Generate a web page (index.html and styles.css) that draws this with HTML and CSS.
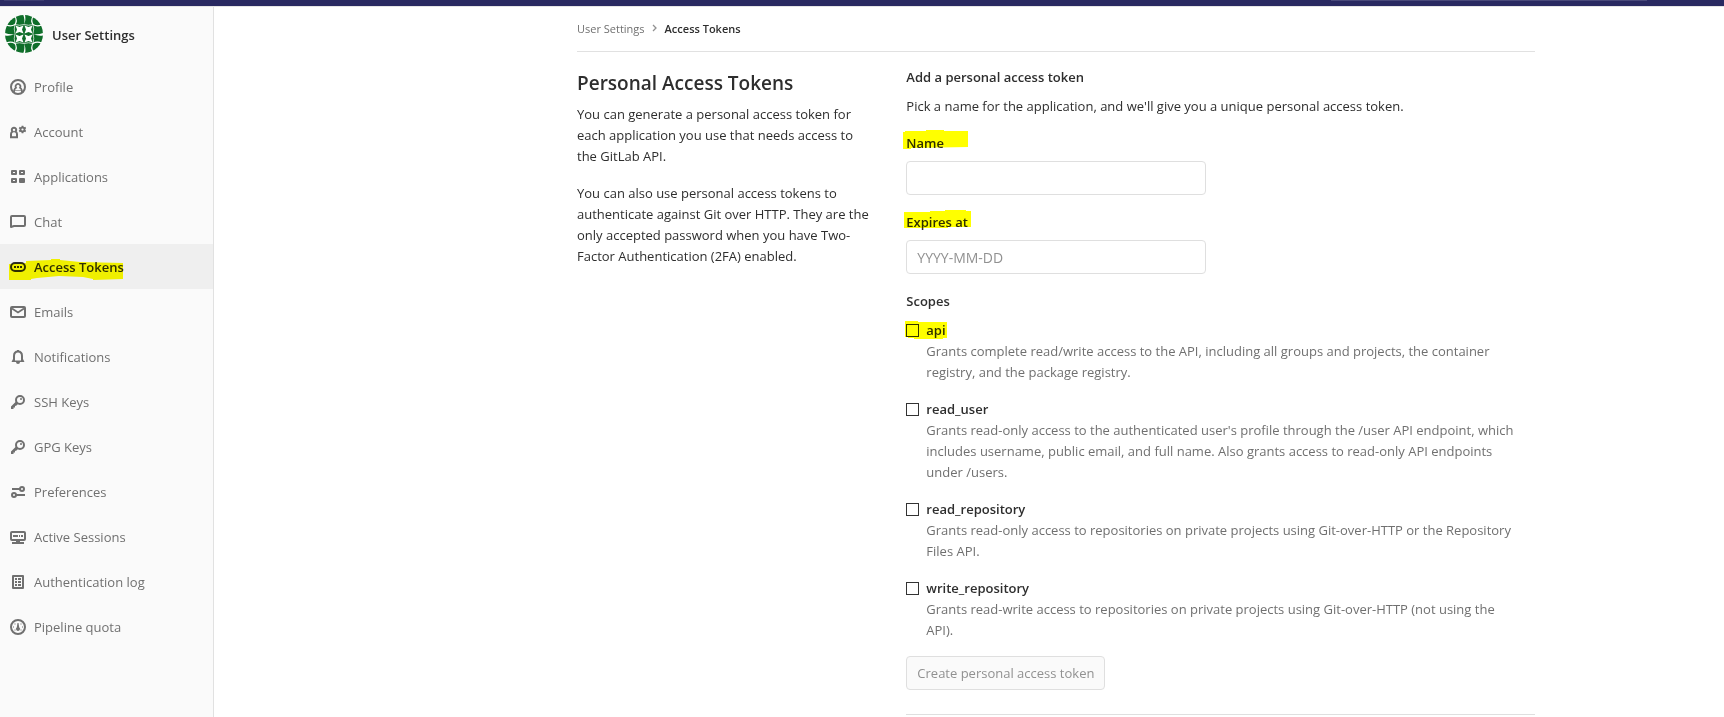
FILE: index.html
```html
<!DOCTYPE html>
<html lang="en">
<head>
<meta charset="utf-8">
<title>Access Tokens · User Settings</title>
<link rel="stylesheet" href="styles.css">
</head>
<body>
<header class="navbar"><span class="navbar-logo"></span><span class="navbar-search"></span></header>
<div class="page">
  <aside class="sidebar">
    <a class="context" href="#">
      <svg class="avatar" viewBox="0 0 38 38" aria-hidden="true">
        <circle cx="19" cy="19" r="19" fill="#0f6e2a"/>
        <g fill="#fff">
          <path d="M10.500 10.500l4 1.500 4-1.500-1.500 4 1.500 4-4-1.500-4 1.500 1.500-4zM19.500 10.500l4 1.500 4-1.500-1.500 4 1.500 4-4-1.500-4 1.500 1.500-4zM10.500 19.500l4 1.500 4-1.500-1.500 4 1.500 4-4-1.500-4 1.500 1.500-4zM19.500 19.500l4 1.500 4-1.500-1.500 4 1.500 4-4-1.500-4 1.500 1.500-4z"/>
          <path id="lens" d="M0 18q5 2 9.500 1-4.500 2.500-9.500 1.500zM38 18q-5 2-9.500 1 4.500 2.500 9.500 1.500zM18.300 0q2 5 .5 9.500 2.500-4.500 1.200-9.500zM18.300 38q2-5 .5-9.500 2.500 4.500 1.200 9.500z"/>
        </g>
        <g fill="none" stroke="#fff" stroke-width="1.200">
          <path d="M10 1.500q2.500 4 0 8-4 2.500-8.500.5M28 1.500q-2.500 4 0 8 4 2.500 8.500.5M10 36.500q2.500-4 0-8-4-2.500-8.500-.5M28 36.500q-2.500-4 0-8 4-2.500 8.500-.5"/>
          <path d="M10 9.500q-1.500 4.500 0 9-1.500 5 0 10 4.500-1.500 9 0 4.500-1.500 9 0 1.500-5 0-10 1.500-4.500 0-9-4.500 1.500-9 0-4.500 1.500-9 0z" stroke-width=".7"/>
        </g>
      </svg>
      <span class="context-title">User Settings</span>
    </a>
    <nav>
      <ul class="menu">
        <li><a href="#"><svg class="icon" viewBox="0 0 16 16"><circle cx="8" cy="8" r="7" fill="none" stroke="currentColor" stroke-width="2"/><path d="M4 13c0-2.500.6-3.600 2-4.300a2.400 2.400 0 1 1 4 0c1.400.7 2 1.800 2 4.300" fill="none" stroke="currentColor" stroke-width="1.700"/><path d="M5 11h6v1H5z" opacity=".6"/></svg>Profile</a></li>
        <li><a href="#"><svg class="icon" viewBox="0 0 16 16"><path d="M1 13.200V10c0-1.300.6-2 1.600-2.400a2.200 2.200 0 1 1 2.800 0C6.400 8 7 8.700 7 10v3.200z" fill="none" stroke="currentColor" stroke-width="2"/><circle cx="12.500" cy="5.500" r="2" fill="none" stroke="currentColor" stroke-width="1.800"/><path d="M12.500 1.700v1.800M12.500 7.500v1.800M9.200 3.600l1.600.9M14.200 6.500l1.600.9M9.200 7.400l1.600-.9M14.200 4.500l1.600-.9" stroke="currentColor" stroke-width="1.800"/></svg>Account</a></li>
        <li><a href="#"><svg class="icon" viewBox="0 0 16 16"><path fill="none" stroke="currentColor" stroke-width="2" stroke-linejoin="round" d="M2 2h4v3H2zM10 2h4v3h-4zM2 10h4v3H2z"/><rect x="9" y="9" width="6" height="5" rx="1"/></svg>Applications</a></li>
        <li><a href="#"><svg class="icon" viewBox="0 0 16 16"><path fill="none" stroke="currentColor" stroke-width="2" stroke-linejoin="round" d="M1 13V3q0-1 1-1h12q1 0 1 1v8q0 1-1 1H4z"/></svg>Chat</a></li>
        <li class="active"><a href="#"><svg class="icon" viewBox="0 0 16 16"><rect x="1" y="4" width="14" height="8" rx="4" fill="none" stroke="currentColor" stroke-width="2"/><path d="M4 7h2v2H4zM7 7h2v2H7zM10 7h2v2h-2z"/></svg>Access Tokens</a><svg class="marker marker-menu" viewBox="0 0 114 21"><path d="M0 5l17-1v-2l25-1V0h9v1l20 2 43 1v16l-30 1v-1l-10-2-24-1-22 2-6 1v1H0z"/></svg></li>
        <li><a href="#"><svg class="icon" viewBox="0 0 16 16"><rect x="1" y="3" width="14" height="10" rx="1" fill="none" stroke="currentColor" stroke-width="2"/><path d="M2 4.500l6 4 6-4" fill="none" stroke="currentColor" stroke-width="1.800"/></svg>Emails</a></li>
        <li><a href="#"><svg class="icon" viewBox="0 0 16 16"><path fill="none" stroke="currentColor" stroke-width="2" d="M4 12V7q0-4.500 4-4.500T12 7v5"/><path d="M7 1h2v2H7zM3 10l-1.500 3H6q0 2 2 2t2-2h4.500L13 10l-1 1.500H4z"/></svg>Notifications</a></li>
        <li><a href="#"><svg class="icon" viewBox="0 0 16 16"><circle cx="10" cy="6" r="4" fill="none" stroke="currentColor" stroke-width="2"/><circle cx="11" cy="5" r="1"/><path d="M6 7.500L1 12.500V15h2.500v-1.500H5V12l1.500-.5 2-2z"/></svg>SSH Keys</a></li>
        <li><a href="#"><svg class="icon" viewBox="0 0 16 16"><circle cx="10" cy="6" r="4" fill="none" stroke="currentColor" stroke-width="2"/><circle cx="11" cy="5" r="1"/><path d="M6 7.500L1 12.500V15h2.500v-1.500H5V12l1.500-.5 2-2z"/></svg>GPG Keys</a></li>
        <li><a href="#"><svg class="icon" viewBox="0 0 16 16"><g fill="none" stroke="currentColor" stroke-width="2"><circle cx="12" cy="5" r="2"/><circle cx="4" cy="11" r="2"/><path d="M2 5h8M6 11h9"/></g></svg>Preferences</a></li>
        <li><a href="#"><svg class="icon" viewBox="0 0 16 16"><rect x="1" y="3" width="14" height="8" rx="1" fill="none" stroke="currentColor" stroke-width="2"/><path d="M3 6h5v2H3zM9 6h1v2H9zM11 6h2v2h-2zM6 11h4v2H6zM2 13h12v2H2z"/></svg>Active Sessions</a></li>
        <li><a href="#"><svg class="icon" viewBox="0 0 16 16"><rect x="3" y="2" width="10" height="12" fill="none" stroke="currentColor" stroke-width="2" stroke-linejoin="round"/><path d="M5 4h2v2H5zM8 4h3v2H8zM5 7h2v2H5zM8 7h3v2H8zM5 10h2v2H5zM8 10h3v2H8z"/></svg>Authentication log</a></li>
        <li><a href="#"><svg class="icon" viewBox="0 0 16 16"><circle cx="8" cy="8" r="7" fill="none" stroke="currentColor" stroke-width="2"/><path d="M7.500 4h1l.7 4.200a2 2 0 1 1-2.400 0zM3 7.500h1v1H3zM12 7.500h1v1h-1zM4.500 4.500h1v1h-1zM10.500 4.500h1v1h-1zM4.500 10.500h1v1h-1zM10.500 10.500h1v1h-1z"/></svg>Pipeline quota</a></li>
      </ul>
    </nav>
  </aside>
  <main class="content">
    <div class="container">
      <nav class="breadcrumbs" aria-label="Breadcrumb">
        <a href="#">User Settings</a>
        <svg class="chevron" viewBox="0 0 8 8" aria-hidden="true"><path d="M2 1l3 3-3 3" fill="none" stroke="currentColor" stroke-width="1.300"/></svg>
        <a class="current" href="#">Access Tokens</a>
      </nav>
      <div class="row">
        <section class="intro">
          <h1>Personal Access Tokens</h1>
          <p>You can generate a personal access token for each application you use that needs access to the GitLab API.</p>
          <p>You can also use personal access tokens to authenticate against Git over HTTP. They are the only accepted password when you have Two-Factor Authentication (2FA) enabled.</p>
        </section>
        <section class="settings">
          <h2>Add a personal access token</h2>
          <p class="lead">Pick a name for the application, and we'll give you a unique personal access token.</p>
          <form>
            <div class="group">
              <label class="title" for="name">Name<svg class="marker marker-name" viewBox="0 0 65 19"><path d="M0 2h2V1h21V0h18v1h24v16L8 18v1H0z"/></svg></label>
              <input class="field" id="name" type="text">
            </div>
            <div class="group">
              <label class="title" for="expires">Expires at<svg class="marker marker-expires" viewBox="0 0 67 18"><path d="M0 2h26V1h15V0h21v1h5v16H44v1H0z"/></svg></label>
              <input class="field" id="expires" type="text" placeholder="YYYY-MM-DD">
            </div>
            <fieldset class="scopes">
              <legend class="title">Scopes</legend>
              <div class="scope">
                <input type="checkbox" id="api" aria-describedby="api-help">
                <label for="api">api</label>
                <p id="api-help">Grants complete read/write access to the API, including all groups and projects, the container registry, and the package registry.</p>
                <svg class="marker marker-api" viewBox="0 0 42 18"><path d="M0 0h13v1h29v16h-4v1H9v-1H3v-1H0z"/></svg>
              </div>
              <div class="scope">
                <input type="checkbox" id="read_user" aria-describedby="read-user-help">
                <label for="read_user">read_user</label>
                <p id="read-user-help">Grants read-only access to the authenticated user's profile through the /user API endpoint, which includes username, public email, and full name. Also grants access to read-only API endpoints under /users.</p>
              </div>
              <div class="scope">
                <input type="checkbox" id="read_repository" aria-describedby="read-repo-help">
                <label for="read_repository">read_repository</label>
                <p id="read-repo-help">Grants read-only access to repositories on private projects using Git-over-HTTP or the Repository Files API.</p>
              </div>
              <div class="scope">
                <input type="checkbox" id="write_repository" aria-describedby="write-repo-help">
                <label for="write_repository">write_repository</label>
                <p id="write-repo-help">Grants read-write access to repositories on private projects using Git-over-HTTP (not using the API).</p>
              </div>
            </fieldset>
            <button class="submit" type="submit" disabled>Create personal access token</button>
          </form>
          <hr>
        </section>
      </div>
    </div>
  </main>
</div>
</body>
</html>
```
FILE: styles.css
```css
* { box-sizing: border-box; }
body {
  margin: 0;
  background: #fff;
  color: #2e2e2e;
  font-family: "Open Sans", "Noto Sans", sans-serif;
  font-size: 13px;
  line-height: 21px;
}
h1, h2, p, ul, fieldset { margin: 0; padding: 0; }
a { color: inherit; text-decoration: none; }
button, input { font: inherit; }

.navbar {
  display: flex;
  justify-content: space-between;
  height: 7px;
  padding: 0 77px 0 4px;
  background: #292961;
  border-bottom: 1px solid #e5e5e5;
}
.navbar-logo, .navbar-search { height: 1px; background: #49497a; }
.navbar-logo { width: 40px; background: #3c3c70; }
.navbar-search { width: 316px; }

.page { display: flex; min-height: calc(100vh - 7px); }
.sidebar {
  flex: 0 0 214px;
  background: #fafafa;
  border-right: 1px solid #e1e1e1;
}
.context {
  display: flex;
  align-items: center;
  gap: 9px;
  height: 57px;
  padding: 0 5px 3px;
  font-weight: 600;
}
.context-title { padding-top: 2px; }
.avatar { width: 38px; height: 38px; }
.menu { list-style: none; }
.menu li { position: relative; color: #707070; }
.menu a {
  display: flex;
  align-items: flex-start;
  gap: 8px;
  height: 45px;
  padding: 13px 10px 0;
}
.menu .active { background: #efefef; color: #2e2e2e; font-weight: 600; }
.icon { width: 16px; height: 16px; margin-top: 2px; fill: currentColor; }

.marker {
  position: absolute;
  fill: #ff0;
  mix-blend-mode: multiply;
  pointer-events: none;
}
.marker-menu { left: 9px; top: 15px; width: 114px; height: 21px; }
.marker-name { left: -3px; top: -3px; width: 65px; height: 19px; }
.marker-expires { left: -2px; top: -2px; width: 67px; height: 18px; }
.marker-api { left: -1px; top: 1px; width: 42px; height: 18px; }

.content {
  flex: 1;
  display: grid;
  grid-template-columns: minmax(16px, 363fr) minmax(0, 958px) minmax(16px, 189fr);
  overflow: hidden;
}
.container { grid-column: 2; }
.breadcrumbs {
  display: flex;
  align-items: center;
  gap: 6px;
  height: 45px;
  padding-bottom: 2px;
  border-bottom: 1px solid #e1e1e1;
  font-size: 11px;
  color: #707070;
}
.breadcrumbs .current { color: #2e2e2e; font-weight: 600; }
.chevron { width: 8px; height: 8px; color: #919191; }

.row { display: flex; margin: 15px -15px 0; }
.intro { flex: 0 0 33.333%; padding: 0 20px 0 15px; }
.intro h1 { margin: 3px 0 8px; font-size: 19px; line-height: 26px; font-weight: 600; }
.intro p { margin-bottom: 16px; }
.settings { flex: 1; min-width: 0; padding: 0 15px; }
.settings h2 { margin-bottom: 8px; font-size: 13px; font-weight: 600; }
.lead { margin-bottom: 16px; }

.group { display: flex; flex-direction: column; align-items: flex-start; margin-bottom: 17px; }
.title { position: relative; display: block; margin-bottom: 7px; padding: 0; font-weight: 600; }
.field {
  width: calc(50% - 15px);
  height: 34px;
  padding: 6px 10px;
  border: 1px solid #dfdfdf;
  border-radius: 4px;
  background: #fff;
  color: #2e2e2e;
  font-size: 14px;
}
.field::placeholder { color: #919191; opacity: 1; }

.scopes { border: 0; min-width: 0; }
.scopes .title { margin-bottom: 8px; }
.scope {
  position: relative;
  display: grid;
  grid-template-columns: 13px 1fr;
  column-gap: 7px;
  align-items: center;
  margin-bottom: 16px;
}
.scope:last-child { margin-bottom: 15px; }
.scope input {
  appearance: none;
  width: 13px;
  height: 13px;
  margin: 0;
  border: 1px solid #333;
  background: #fff;
}
.scope label { justify-self: start; font-weight: 600; }
.scope p { grid-column: 2; padding-right: 14px; color: #707070; }

.submit {
  display: block;
  height: 34px;
  padding: 0 10px;
  border: 1px solid #dfdfdf;
  border-radius: 4px;
  background: #fafafa;
  color: #919191;
}
hr { margin: 24px 0 0; border: 0; border-top: 1px solid #dfdfdf; }
```
